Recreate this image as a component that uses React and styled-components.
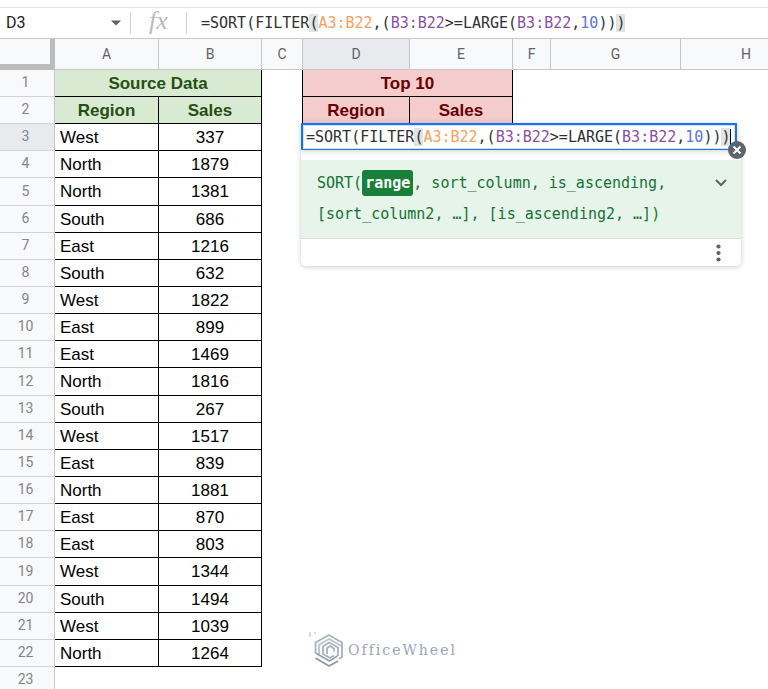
import React from "react";
import styled, { createGlobalStyle, css } from "styled-components";

const MONO = '"DejaVu Sans Mono", "Liberation Mono", monospace';
const UI = 'Roboto, "Liberation Sans", sans-serif';

const GlobalStyle = createGlobalStyle`
  *, *::before, *::after { box-sizing: border-box; }
  html, body { margin: 0; height: 100%; background: #fff; }
  body { overflow: hidden; font-family: "Liberation Sans", Arial, sans-serif; color: #000; }
`;

const Page = styled.main`
  display: flex;
  flex-direction: column;
  height: 100vh;
  overflow: hidden;
`;

const ToolbarEdge = styled.div`
  flex: none;
  height: 8px;
  border-bottom: 1px solid #e2e3e5;
`;

const FormulaBar = styled.header`
  flex: none;
  display: flex;
  align-items: center;
  height: 31px;
  border-bottom: 1px solid #c4c6c8;
`;

const NameBox = styled.label`
  display: flex;
  align-items: center;
  width: 130px;
  padding: 0 9px 0 6px;
`;

const NameInput = styled.input`
  flex: 1;
  min-width: 0;
  padding: 0;
  border: 0;
  outline: 0;
  background: none;
  font: 16px/22px ${UI};
  color: #202124;
`;

const IconButton = styled.button`
  display: flex;
  align-items: center;
  justify-content: center;
  padding: 0;
  border: 0;
  background: none;
  color: #5f6368;
`;

const Divider = styled.span`
  width: 1px;
  height: 22px;
  background: #d0d2d4;
`;

const FxMark = styled.span`
  width: 55px;
  padding-bottom: 4px;
  text-align: center;
  font: italic 26px/26px "Liberation Serif", serif;
  color: #b9bbbd;
`;

const FormulaLine = styled.div`
  flex: 1;
  padding-left: 14px;
  font: 15px/20px ${MONO};
  white-space: pre;
  outline: 0;
`;

const tokenColors = { plain: "#303134", first: "#f9a05a", second: "#8a4fa3", number: "#5a74dc" };

const Token = styled.span`
  color: ${(p) => tokenColors[p.$kind]};
  ${(p) => p.$match && css`
    background: #e2e3e3;
  `}
`;

const SheetArea = styled.div`
  position: relative;
  flex: 1;
  overflow: hidden;
`;

const Sheet = styled.table`
  width: 812px;
  table-layout: fixed;
  border-collapse: separate;
  border-spacing: 0;
  th, td { padding: 0; }
`;

const Col = styled.col`
  width: ${(p) => p.$w}px;
`;

const HeadRow = styled.tr`
  height: 31px;
`;

const SheetRow = styled.tr`
  height: ${(p) => (p.$tall ? 28 : 27)}px;
`;

const Corner = styled.td`
  background: #f8f9fa;
  border-right: 5px solid #bcbcbc;
  border-bottom: 6px solid #bcbcbc;
`;

const ColumnHead = styled.th`
  border-right: 1px solid #c4c6c8;
  border-bottom: 1px solid #c4c6c8;
  background: ${(p) => (p.$active ? "#e8eaed" : "#f8f9fa")};
  font: 400 14px/18px ${UI};
  color: #5f6368;
`;

const RowHead = styled.th`
  border-right: 1px solid #c4c6c8;
  border-bottom: 1px solid #d0d2d4;
  background: ${(p) => (p.$active ? "#e8eaed" : "#f8f9fa")};
  font: 400 14px/18px ${UI};
  color: #80868b;
  && { padding: 0 3px 2px 0; }
`;

const Cell = styled.td`
  font-size: 17px;
  line-height: 20px;
  ${(p) => p.$boxed && css`
    border-right: 1px solid #000;
    border-bottom: 1px solid #000;
  `}
  ${(p) => p.$edge && css`
    border-right: 1px solid #000;
  `}
  text-align: ${(p) => (p.$center ? "center" : "left")};
  && { padding: 1px 0 0 ${(p) => (p.$center ? 0 : 5)}px; }
`;

const tones = {
  green: css`background: #d9ead3; color: #274e13;`,
  red: css`background: #f4cccc; color: #660000;`,
};

const TitleCell = styled(Cell)`
  font-weight: 700;
  ${(p) => tones[p.$tone]}
`;

const EditorLayer = styled.div`
  position: absolute;
  top: 84px;
  left: 301px;
  width: 440px;
`;

const CellEditor = styled.div`
  position: relative;
  z-index: 1;
  width: 436px;
  height: 27px;
  padding-left: 3px;
  border: 2px solid #1a73e8;
  border-bottom-width: 1px;
  background: #fff;
  box-shadow: inset 0 0 0 1px #d2e3fc, 0 1px 6px rgba(60, 64, 67, 0.25);
  font: 15px/24px ${MONO};
  white-space: pre;
`;

const Caret = styled.span`
  display: inline-block;
  width: 1px;
  height: 18px;
  background: #000;
  vertical-align: middle;
`;

const CloseButton = styled(IconButton)`
  position: absolute;
  right: -11px;
  bottom: -10px;
`;

const HelpCard = styled.section`
  width: 440px;
  padding-top: 10px;
  border-radius: 0 0 5px 5px;
  background: #fff;
  box-shadow: 0 1px 5px rgba(60, 64, 67, 0.28);
`;

const Signature = styled.div`
  display: flex;
  align-items: flex-start;
  justify-content: space-between;
  padding: 8px 14px 8px 16px;
  border-bottom: 1px solid #dadce0;
  background: #e6f4ea;
  font: 15px/31px ${MONO};
  color: #137333;
`;

const SignatureText = styled.p`
  margin: 0;
  white-space: nowrap;
`;

const CollapseButton = styled(IconButton)`
  height: 30px;
`;

const ActiveArg = styled.b`
  padding: 4px 3px;
  border-radius: 3px;
  background: #188038;
  color: #fff;
`;

const HelpFooter = styled.footer`
  display: flex;
  align-items: center;
  justify-content: flex-end;
  height: 27px;
  padding-right: 20px;
`;

const Watermark = styled.div`
  position: absolute;
  top: 592px;
  left: 307px;
  display: flex;
  align-items: center;
  gap: 4px;
  font: 14px/20px "DejaVu Serif", serif;
  letter-spacing: 2px;
  color: #9ba4b8;
`;

const formula = [
  ["=SORT(FILTER", "plain"],
  ["(", "plain", true],
  ["A3:B22", "first"],
  [",(", "plain"],
  ["B3:B22", "second"],
  [">=LARGE(", "plain"],
  ["B3:B22", "second"],
  [",", "plain"],
  ["10", "number"],
  ["))", "plain"],
  [")", "plain", true],
];

const columns = [
  ["A", 104], ["B", 103], ["C", 41], ["D", 107], ["E", 103], ["F", 38], ["G", 130], ["H", 131],
];

const data = [
  ["West", 337], ["North", 1879], ["North", 1381], ["South", 686], ["East", 1216],
  ["South", 632], ["West", 1822], ["East", 899], ["East", 1469], ["North", 1816],
  ["South", 267], ["West", 1517], ["East", 839], ["North", 1881], ["East", 870],
  ["East", 803], ["West", 1344], ["South", 1494], ["West", 1039], ["North", 1264],
];

const tallRows = [5, 12, 19];

const Formula = () =>
  formula.map(([text, kind, match], i) => (
    <Token key={i} $kind={kind} $match={match}>{text}</Token>
  ));

const DropArrow = () => (
  <svg width="10" height="6" viewBox="0 0 10 6" aria-hidden="true">
    <path d="M0 0.5h10L5 5.5z" fill="currentColor" />
  </svg>
);

const ChevronDown = () => (
  <svg width="12" height="8" viewBox="0 0 12 8" aria-hidden="true">
    <path d="M1 1l5 5 5-5" fill="none" stroke="currentColor" strokeWidth="2" />
  </svg>
);

const MoreDots = () => (
  <svg width="5" height="18" viewBox="0 0 5 18" fill="currentColor" aria-hidden="true">
    <circle cx="2.5" cy="2.5" r="2.1" />
    <circle cx="2.5" cy="9" r="2.1" />
    <circle cx="2.5" cy="15.5" r="2.1" />
  </svg>
);

const CloseBadge = () => (
  <svg width="18" height="18" viewBox="0 0 18 18" aria-hidden="true">
    <circle cx="9" cy="9" r="9" fill="#5f6368" />
    <path d="M5.5 5.5l7 7M12.5 5.5l-7 7" stroke="#fff" strokeWidth="2" />
    <path d="M4.5 4v3M4 4.5h3" stroke="#1a73e8" strokeWidth="1" />
  </svg>
);

const WheelLogo = () => (
  <svg width="37" height="38" viewBox="0 0 37 38" fill="none" stroke="#a9b0c0" strokeWidth="1.8" aria-hidden="true">
    <path d="M3 1v5M8 1v2" stroke="#d7d9de" />
    <path d="M8.5 22V11.5L22 4l5 3" />
    <path d="M12 24V14l10-6 12.500 7" stroke="#bcc2ce" />
    <path d="M27 7l8 4.500V26l-3 2" />
    <path d="M31 25V16.500L22 11.500l-6 4V23l7 4 4-2.500" />
    <path d="M20 23v-6l3-2 4 2.500v3" />
    <path d="M8.500 22l14 8 8-5" stroke="#98a1b4" />
    <path d="M8.500 27l13.500 8 9-5" stroke="#8d97ac" />
  </svg>
);

export default function App() {
  return (
    <>
      <GlobalStyle />
      <Page>
        <ToolbarEdge />
        <FormulaBar>
          <NameBox>
            <NameInput aria-label="Name box" defaultValue="D3" />
            <IconButton type="button" aria-label="Named ranges"><DropArrow /></IconButton>
          </NameBox>
          <Divider />
          <FxMark>fx</FxMark>
          <Divider />
          <FormulaLine role="textbox" aria-label="Formula bar" tabIndex={0}><Formula /></FormulaLine>
        </FormulaBar>
        <SheetArea>
          <Sheet>
            <colgroup>
              <Col $w={55} />
              {columns.map(([name, w]) => <Col key={name} $w={w} />)}
            </colgroup>
            <thead>
              <HeadRow>
                <Corner />
                {columns.map(([name]) => (
                  <ColumnHead key={name} scope="col" $active={name === "D"}>{name}</ColumnHead>
                ))}
              </HeadRow>
            </thead>
            <tbody>
              <SheetRow>
                <RowHead scope="row">1</RowHead>
                <TitleCell colSpan={2} $tone="green" $boxed $center>Source Data</TitleCell>
                <Cell $edge />
                <TitleCell colSpan={2} $tone="red" $boxed $center>Top 10</TitleCell>
                <Cell colSpan={3} />
              </SheetRow>
              <SheetRow>
                <RowHead scope="row">2</RowHead>
                <TitleCell $tone="green" $boxed $center>Region</TitleCell>
                <TitleCell $tone="green" $boxed $center>Sales</TitleCell>
                <Cell $edge />
                <TitleCell $tone="red" $boxed $center>Region</TitleCell>
                <TitleCell $tone="red" $boxed $center>Sales</TitleCell>
                <Cell colSpan={3} />
              </SheetRow>
              {data.map(([region, sales], i) => (
                <SheetRow key={i} $tall={tallRows.includes(i + 3)}>
                  <RowHead scope="row" $active={i === 0}>{i + 3}</RowHead>
                  <Cell $boxed>{region}</Cell>
                  <Cell $boxed $center>{sales}</Cell>
                  <Cell colSpan={6} />
                </SheetRow>
              ))}
              <SheetRow>
                <RowHead scope="row">23</RowHead>
                <Cell colSpan={8} />
              </SheetRow>
            </tbody>
          </Sheet>
          <EditorLayer>
            <CellEditor role="textbox" aria-label="Cell D3" tabIndex={0}>
              <Formula /><Caret />
              <CloseButton type="button" aria-label="Close formula help"><CloseBadge /></CloseButton>
            </CellEditor>
            <HelpCard aria-label="Formula help">
              <Signature>
                <SignatureText>
                  SORT(<ActiveArg>range</ActiveArg>, sort_column, is_ascending,<br />
                  [sort_column2, …], [is_ascending2, …])
                </SignatureText>
                <CollapseButton type="button" aria-label="Collapse"><ChevronDown /></CollapseButton>
              </Signature>
              <HelpFooter>
                <IconButton type="button" aria-label="More options"><MoreDots /></IconButton>
              </HelpFooter>
            </HelpCard>
          </EditorLayer>
          <Watermark><WheelLogo /><span>OfficeWheel</span></Watermark>
        </SheetArea>
      </Page>
    </>
  );
}
